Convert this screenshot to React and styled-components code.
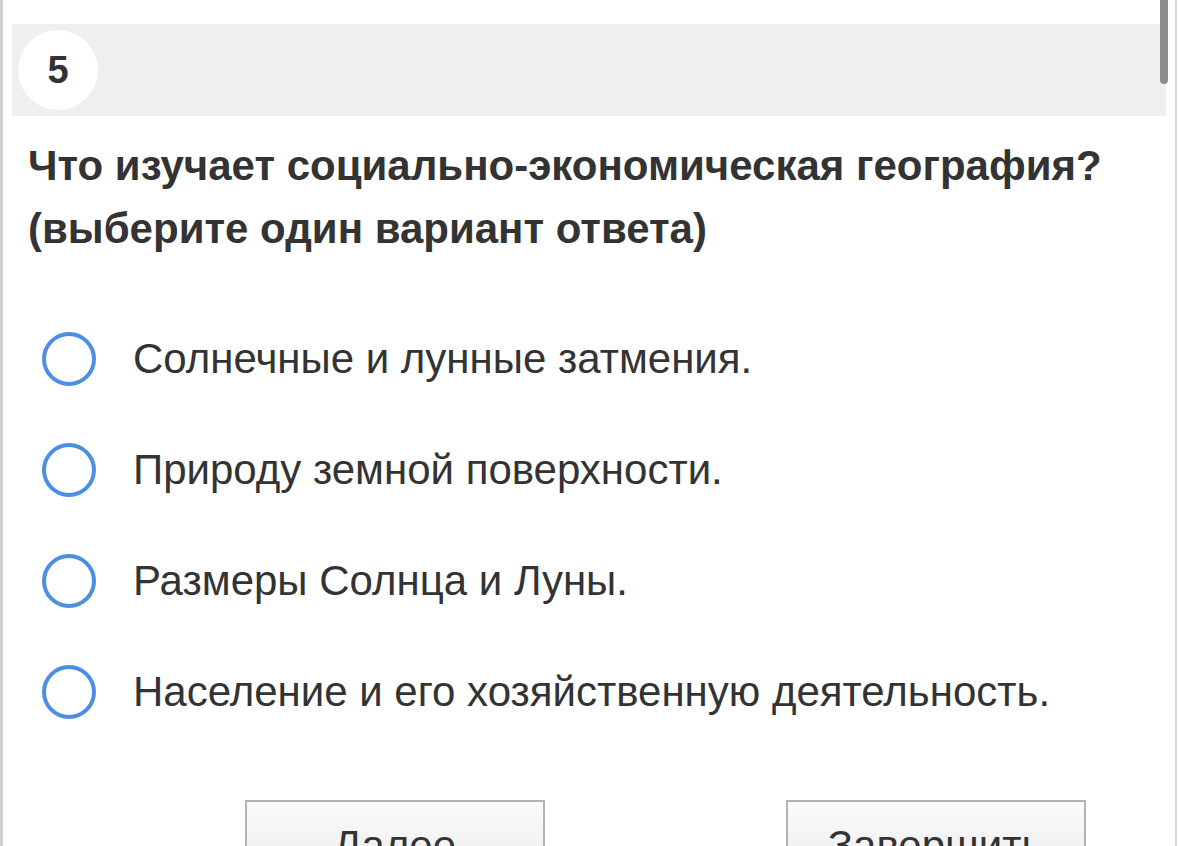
import React from "react";
import styled, { createGlobalStyle } from "styled-components";

const GlobalStyle = createGlobalStyle`
  html, body {
    margin: 0;
    padding: 0;
    background: #fff;
    overflow: hidden;
  }
  body {
    font-family: "Liberation Sans", Arial, sans-serif;
    color: #333;
  }
`;

const answers = [
  "Солнечные и лунные затмения.",
  "Природу земной поверхности.",
  "Размеры Солнца и Луны.",
  "Население и его хозяйственную деятельность.",
];

export default function App() {
  return (
    <>
      <GlobalStyle />
      <Page>
        <Scroll />
        <Header>
          <Number>5</Number>
        </Header>
        <Question>
          Что изучает социально-экономическая география? (выберите один вариант ответа)
        </Question>
        <Options>
          {answers.map((a) => (
            <Option key={a}>
              <Radio />
              <OptionText>{a}</OptionText>
            </Option>
          ))}
        </Options>
        <Buttons>
          <Button>Далее</Button>
          <Button>Завершить</Button>
        </Buttons>
      </Page>
    </>
  );
}

const Page = styled.div`
  position: relative;
  box-sizing: border-box;
  width: 1177px;
  height: 846px;
  border-left: 3px solid #cfcfcf;
  border-right: 2px solid #d6d6d6;
  padding: 24px 9px 0 9px;
  overflow: hidden;
`;

const Scroll = styled.div`
  position: absolute;
  top: 0;
  left: 1157px;
  width: 8px;
  height: 84px;
  background: #8c8c8c;
  border-radius: 0 0 4px 4px;
`;

const Header = styled.div`
  height: 92px;
  background: #efefef;
  display: flex;
  align-items: center;
  padding-left: 6px;
`;

const Number = styled.div`
  width: 80px;
  height: 80px;
  border-radius: 50%;
  background: #fff;
  display: flex;
  align-items: center;
  justify-content: center;
  font-size: 38px;
  font-weight: bold;
  color: #333;
`;

const Question = styled.div`
  margin-top: 18px;
  padding: 0 30px 0 16px;
  font-size: 42px;
  line-height: 63px;
  font-weight: bold;
  color: #333;
`;

const Options = styled.div`
  display: flex;
  flex-direction: column;
  gap: 57px;
  margin-top: 72px;
  padding-left: 30px;
`;

const Option = styled.div`
  display: flex;
  align-items: center;
  height: 54px;
`;

const Radio = styled.span`
  box-sizing: border-box;
  width: 54px;
  height: 54px;
  border-radius: 50%;
  border: 4.5px solid #4a8ee6;
  flex-shrink: 0;
`;

const OptionText = styled.span`
  margin-left: 37px;
  font-size: 42px;
  color: #333;
`;

const Buttons = styled.div`
  display: flex;
  justify-content: center;
  gap: 241px;
  margin-top: 81px;
  padding-left: 152px;
`;

const Button = styled.div`
  box-sizing: border-box;
  width: 300px;
  height: 90px;
  border: 2px solid #b3b3b3;
  background: linear-gradient(#fbfbfb, #e9e9e9);
  display: flex;
  justify-content: center;
  padding-top: 20px;
  font-size: 42px;
  color: #333;
`;
